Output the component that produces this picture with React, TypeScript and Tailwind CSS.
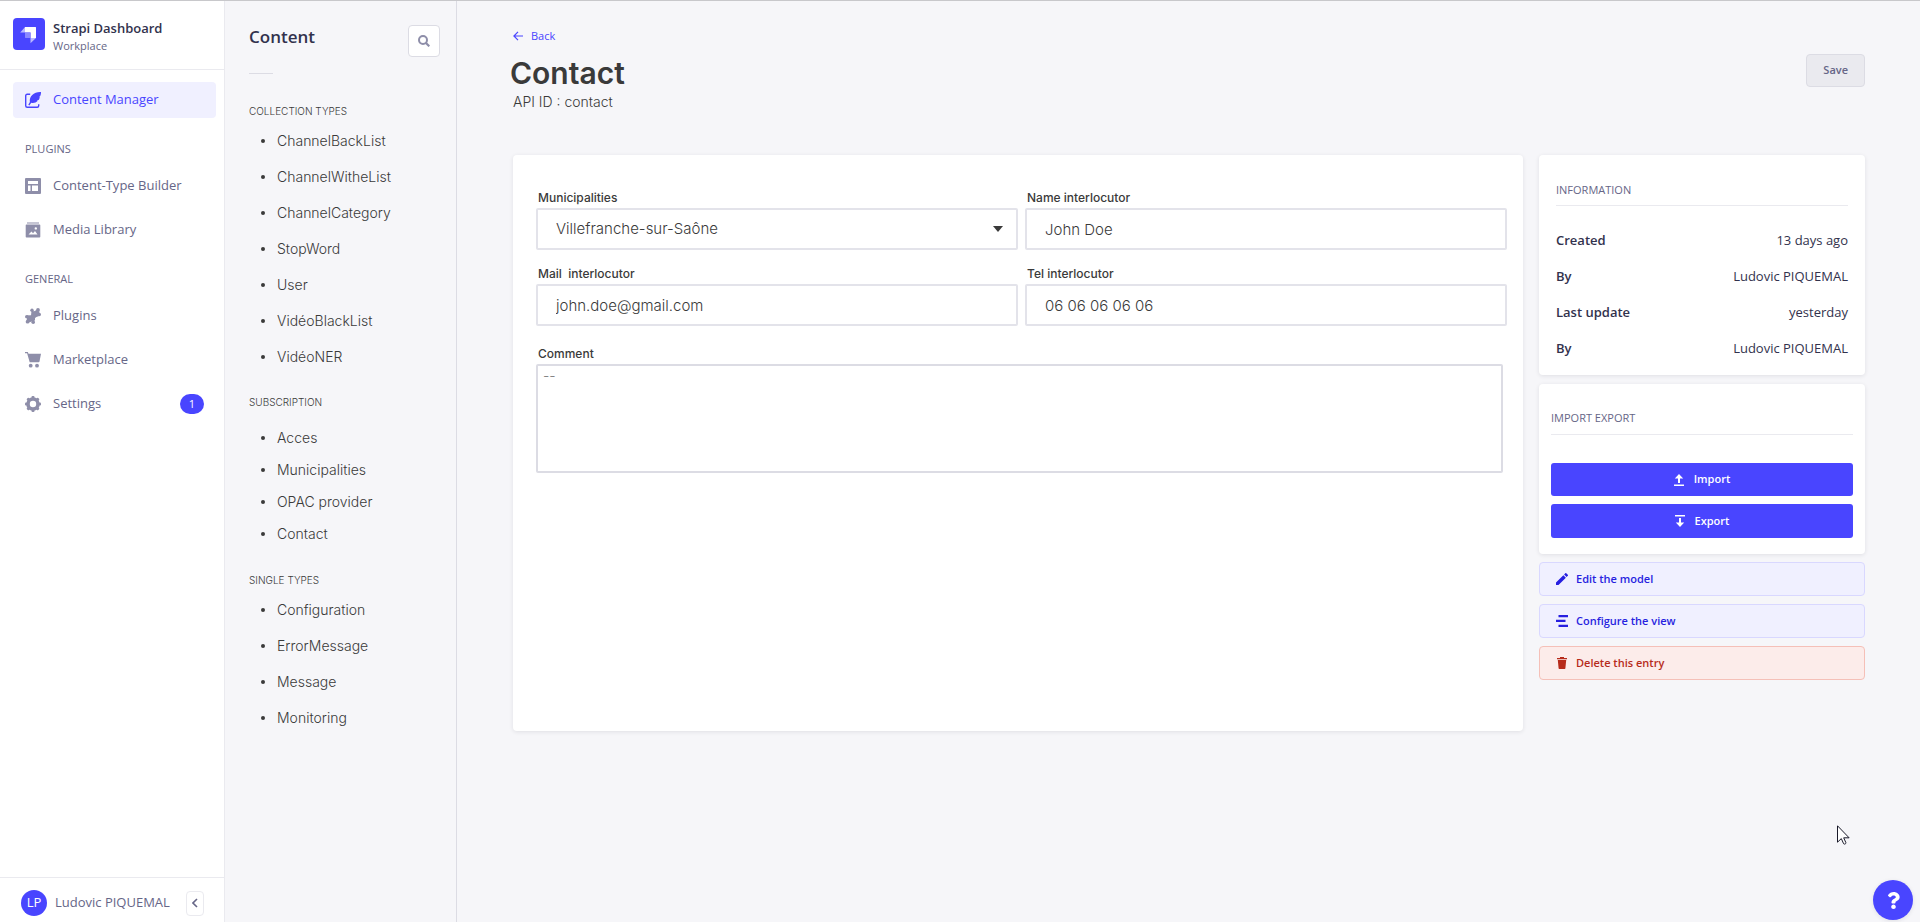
import { useState } from "react";
import clsx from "clsx";
import { FaQuestion } from "react-icons/fa";

const WriteIcon = () => (
  <svg width="16" height="16" viewBox="0 0 16 16" fill="none">
    <path
      d="M5.2 2.3H2.2C1.3 2.3.7 2.9.7 3.8v10c0 .9.6 1.5 1.5 1.5h10c.9 0 1.5-.6 1.5-1.5v-1.6"
      stroke="currentColor"
      strokeWidth="1.4"
    />
    <path
      d="M16 0c-3.500-.1-6.600.9-8.800 3C5 5.100 4.500 7.800 4.900 9.900L3.300 12.700l1.100.7 1.800-2.600c2.500.6 5-.2 6.300-1.700l-.6-.4 2-.9c.4-.8.7-1.700.9-2.500l-.6-.3 1-.9C15.900 2.500 16 1.200 16 0z"
      fill="currentColor"
    />
  </svg>
);

const LayoutIcon = () => (
  <svg width="16" height="16" viewBox="0 0 16 16" fill="currentColor">
    <path
      fillRule="evenodd"
      d="M1 0h14a1 1 0 0 1 1 1v14a1 1 0 0 1-1 1H1a1 1 0 0 1-1-1V1a1 1 0 0 1 1-1zm2 3v3h10V3H3zm0 4.500V13h2.500V7.500H3zm4 0V13h6V7.500H7z"
    />
  </svg>
);

const LandscapeIcon = () => (
  <svg width="16" height="16" viewBox="0 0 16 16" fill="currentColor">
    <rect x="2" y="0" width="12" height="2" opacity=".5" />
    <path
      fillRule="evenodd"
      d="M1.500 2.500h13c.5 0 .8.300.8.800v11.400c0 .5-.3.800-.8.800h-13c-.5 0-.8-.3-.8-.8V3.300c0-.5.3-.8.8-.8zM3.500 12.500h9L10 9l-2 2.200-1.500-1.600-3 2.900zM10.800 5.200a1.200 1.200 0 1 0 0 2.400 1.200 1.200 0 0 0 0-2.400z"
    />
  </svg>
);

const PuzzleIcon = () => (
  <svg width="16" height="16" viewBox="0 0 16 16" fill="currentColor">
    <path d="M7 2.500L8.800 3.500 11.500 2l3 2-1 3.500-3.500 2.500-1 4.500-2-1L3.500 14.500l-2-2.500 1-2 3.500-2.500z" />
    <circle cx="7" cy="2.300" r="1.700" />
    <circle cx="13" cy="2" r="1.900" />
    <circle cx="14.300" cy="6.500" r="1.700" />
    <circle cx="1.800" cy="8.700" r="1.800" />
    <circle cx="2.600" cy="13.700" r="1.900" />
    <circle cx="8.200" cy="14.200" r="1.800" />
    <rect x="2" y="7.300" width="8" height="5" />
    <rect x="6.500" y="3.500" width="7" height="5" />
  </svg>
);

const CartIcon = () => (
  <svg width="16" height="16" viewBox="0 0 16 16" fill="currentColor">
    <path d="M0 0h2.800l.7 1.700H16l-1.500 7.800c-.1.500-.4.800-.9.800H4.700L2.100 1.300H0V0z" />
    <circle cx="5.700" cy="13.700" r="1.900" />
    <circle cx="12" cy="13.700" r="1.900" />
  </svg>
);

const CogIcon = () => (
  <svg width="16" height="16" viewBox="0 0 16 16">
    <circle cx="8" cy="8" r="5" fill="none" stroke="currentColor" strokeWidth="3.600" />
    <g fill="currentColor">
      {[0, 45, 90, 135, 180, 225, 270, 315].map((a) => (
        <rect key={a} x="6.500" y="0" width="3" height="3" rx="1" transform={`rotate(${a} 8 8)`} />
      ))}
    </g>
  </svg>
);

const UploadIcon = () => (
  <svg width="10" height="12" viewBox="0 0 10 12" fill="currentColor">
    <path d="M5 0l4.200 4.500H6V9H4V4.500H.8L5 0zM0 10.500h10V12H0z" />
  </svg>
);

const DownloadIcon = () => (
  <svg width="10" height="12" viewBox="0 0 10 12" fill="currentColor">
    <path d="M0 0h10v1.500H0zM4 3h2v4.500h3.200L5 12 .8 7.500H4z" />
  </svg>
);

const PencilIcon = () => (
  <svg width="12" height="12" viewBox="3 3 18 18" fill="currentColor">
    <path d="M3 17.250V21h3.750L17.810 9.940l-3.750-3.750L3 17.250zM20.710 7.040a1 1 0 0 0 0-1.410l-2.340-2.340a1 1 0 0 0-1.410 0l-1.830 1.830 3.750 3.750 1.830-1.830z" />
  </svg>
);

const TrashIcon = () => (
  <svg width="12" height="12" viewBox="0 0 12 12" fill="currentColor">
    <path d="M4 0h4v1h3v1.200H1V1h3V0zM1.800 3h8.400l-.8 8.300c0 .4-.3.700-.7.700H3.300c-.4 0-.7-.3-.7-.7L1.800 3z" />
  </svg>
);

const BarsIcon = () => (
  <svg width="12" height="12" viewBox="0 0 12 12" fill="currentColor">
    <path d="M2.500 0H12v2.300H2.500zM0 4.800h9.500v2.300H0zM2.500 9.700H12V12H2.500z" />
  </svg>
);

const pluginLinks = [
  { label: "Content-Type Builder", icon: <LayoutIcon /> },
  { label: "Media Library", icon: <LandscapeIcon /> },
];

const generalLinks = [
  { label: "Plugins", icon: <PuzzleIcon /> },
  { label: "Marketplace", icon: <CartIcon /> },
  { label: "Settings", icon: <CogIcon />, badge: 1 },
];

const information = [
  ["Created", "13 days ago"],
  ["By", "Ludovic PIQUEMAL"],
  ["Last update", "yesterday"],
  ["By", "Ludovic PIQUEMAL"],
];

type NavLink = { label: string; icon: React.ReactNode; badge?: number };

const NavSection = ({ title, links }: { title: string; links: NavLink[] }) => (
  <section className="mt-[19px]">
    <h2 className="px-3 text-[11px] leading-4 font-medium text-[#666687]">
      {title}
    </h2>
    <ul className="mt-[7px]">
      {links.map(({ label, icon, badge }) => (
        <li key={label}>
          <a href="#" className="flex h-11 items-center gap-3 px-3">
            <span className="text-[#8e8ea9]">{icon}</span>
            {label}
            {badge && (
              <span className="ml-auto flex h-5 w-6 items-center justify-center rounded-full bg-[#4945ff] text-[11px] text-white">
                {badge}
              </span>
            )}
          </a>
        </li>
      ))}
    </ul>
  </section>
);

const SubNavSection = ({
  title,
  items,
  compact,
  className,
}: {
  title: string;
  items: string[];
  compact?: boolean;
  className?: string;
}) => (
  <section className={className}>
    <h3 className="text-[10px] leading-4">{title}</h3>
    <ul className={compact ? "mt-3" : "mt-1"}>
      {items.map((item) => (
        <li key={item}>
          <a
            href="#"
            className={clsx(
              "flex items-center gap-3 pl-3 text-sm",
              compact ? "h-8" : "h-9",
            )}
          >
            <span className="size-1 rounded-full bg-[#3a3a3a]" />
            {item}
          </a>
        </li>
      ))}
    </ul>
  </section>
);

const Label = ({ htmlFor, children }: { htmlFor: string; children: string }) => (
  <label
    htmlFor={htmlFor}
    className="block pl-0.5 text-xs leading-5 font-medium whitespace-pre"
  >
    {children}
  </label>
);

const inputClass =
  "h-[42px] w-full rounded-xs border-2 border-[#e3e3ea] bg-white pl-[18px] text-[15px] font-light outline-none";

export default function App() {
  const [municipality, setMunicipality] = useState("Villefranche-sur-Saône");
  const [name, setName] = useState("John Doe");
  const [mail, setMail] = useState("john.doe@gmail.com");
  const [tel, setTel] = useState("06 06 06 06 06");
  const [comment, setComment] = useState("");

  return (
    <div className="flex min-h-screen border-t border-[#c8c8cb] bg-[#f6f6f9] font-['Open_Sans',sans-serif] text-[13px] text-[#32324d]">
      <aside className="flex w-[225px] shrink-0 flex-col border-r border-[#eaeaef] bg-white text-[#666687]">
        <div className="flex h-[69px] items-start gap-2 border-b border-[#eaeaef] px-[13px] pt-[17px]">
          <svg width="32" height="32" viewBox="0 0 32 32">
            <rect width="32" height="32" rx="4" fill="#4945ff" />
            <path d="M12 9h10.500c.3 0 .5.200.5.500V20h-5.500v-5.500H12V9z" fill="#fff" />
            <path d="M12 9v5.500H7.200L12 9zM17.500 20H23l-5.500 5.300V20z" fill="#b9b7ff" />
            <path d="M12 14.500h5.500V20h-5c-.3 0-.5-.2-.5-.5v-5z" fill="#8b88ff" />
          </svg>
          <div>
            <p className="leading-5 font-semibold text-[#32324d]">
              Strapi Dashboard
            </p>
            <p className="text-[11px] leading-4">Workplace</p>
          </div>
        </div>

        <nav className="grow pt-3 pr-2 pl-[13px]">
          <a
            href="#"
            className="mb-[23px] flex h-9 items-center gap-3 rounded bg-[#f0f0ff] px-3 text-[#4945ff]"
          >
            <WriteIcon />
            Content Manager
          </a>
          <NavSection title="PLUGINS" links={pluginLinks} />
          <NavSection title="GENERAL" links={generalLinks} />
        </nav>

        <div className="flex h-[45px] items-center border-t border-[#eaeaef] pt-1.5 pr-5 pl-[21px]">
          <span className="flex size-[26px] items-center justify-center rounded-full bg-[#4945ff] text-[13px] text-white">
            LP
          </span>
          <span className="ml-2 whitespace-nowrap">Ludovic PIQUEMAL</span>
          <button
            type="button"
            aria-label="Collapse menu"
            className="ml-auto flex h-[25px] w-[18px] items-center justify-center rounded border border-[#eaeaef]"
          >
            <svg width="6" height="10" viewBox="0 0 6 10" fill="none">
              <path d="M5 1L1 5l4 4" stroke="currentColor" strokeWidth="1.600" />
            </svg>
          </button>
        </div>
      </aside>

      <aside className="w-[232px] shrink-0 border-r border-[#dcdce4] pt-6 pr-4 pl-6 font-[Inter,sans-serif] font-light text-[#3a3a3a]">
        <div className="flex items-start justify-between">
          <h2 className="font-['Open_Sans',sans-serif] text-[17px] leading-6 font-semibold text-[#32324d]">
            Content
          </h2>
          <button
            type="button"
            aria-label="Search"
            className="flex size-8 items-center justify-center rounded border border-[#dcdce4] bg-white text-[#8e8ea9]"
          >
            <svg width="12" height="12" viewBox="0 0 12 12" fill="none" stroke="currentColor">
              <circle cx="5" cy="5" r="4" strokeWidth="2" />
              <path d="M8 8l3.300 3.300" strokeWidth="2.200" />
            </svg>
          </button>
        </div>
        <hr className="mt-4 w-6 border-[#dcdce4]" />

        <SubNavSection
          title="COLLECTION TYPES"
          className="mt-[29px]"
          items={[
            "ChannelBackList",
            "ChannelWitheList",
            "ChannelCategory",
            "StopWord",
            "User",
            "VidéoBlackList",
            "VidéoNER",
          ]}
        />
        <SubNavSection
          title="SUBSCRIPTION"
          className="mt-[19px]"
          compact
          items={["Acces", "Municipalities", "OPAC provider", "Contact"]}
        />
        <SubNavSection
          title="SINGLE TYPES"
          className="mt-[22px]"
          items={["Configuration", "ErrorMessage", "Message", "Monitoring"]}
        />
      </aside>

      <main className="min-w-0 grow pt-[27px] pr-[55px] pl-14">
        <a href="#" className="flex w-fit items-center gap-2 text-[11px] leading-4 text-[#4945ff]">
          <svg width="10" height="10" viewBox="0 0 10 10" fill="none" stroke="currentColor">
            <path d="M10 5H1M5 .8L.9 5 5 9.200" strokeWidth="1.200" />
          </svg>
          Back
        </a>

        <header className="mt-[10px] flex items-start justify-between font-[Inter,sans-serif] text-[#3a3a3a]">
          <div>
            <h1 className="-ml-[3px] text-[30px] leading-[38px] font-semibold">
              Contact
            </h1>
            <p className="text-sm leading-5 font-light">API ID : contact</p>
          </div>
          <button
            type="button"
            className="h-[33px] rounded border border-[#dcdce4] bg-[#eaeaef] px-4 font-['Open_Sans',sans-serif] text-[11px] font-semibold text-[#666687]"
          >
            Save
          </button>
        </header>

        <div className="mt-[43px] flex items-start gap-4">
          <form className="min-h-[576px] min-w-0 grow rounded bg-white pt-[33px] pr-4 pl-[23px] font-[Inter,sans-serif] text-[#3a3a3a] shadow-[0_1px_4px_rgba(33,33,52,0.1)]">
            <div className="grid grid-cols-2 gap-x-[7px] gap-y-[14px]">
              <div>
                <Label htmlFor="municipalities">Municipalities</Label>
                <div className="relative">
                  <select
                    id="municipalities"
                    value={municipality}
                    onChange={(e) => setMunicipality(e.target.value)}
                    className={clsx(inputClass, "appearance-none")}
                  >
                    <option>Villefranche-sur-Saône</option>
                  </select>
                  <svg
                    width="10"
                    height="6"
                    viewBox="0 0 10 6"
                    className="pointer-events-none absolute top-[18px] right-[15px]"
                  >
                    <path d="M0 0h10L5 6z" fill="#3a3a3a" />
                  </svg>
                </div>
              </div>
              <div>
                <Label htmlFor="name">Name interlocutor</Label>
                <input
                  id="name"
                  value={name}
                  onChange={(e) => setName(e.target.value)}
                  className={inputClass}
                />
              </div>
              <div>
                <Label htmlFor="mail">{"Mail  interlocutor"}</Label>
                <input
                  id="mail"
                  type="email"
                  value={mail}
                  onChange={(e) => setMail(e.target.value)}
                  className={inputClass}
                />
              </div>
              <div>
                <Label htmlFor="tel">Tel interlocutor</Label>
                <input
                  id="tel"
                  type="tel"
                  value={tel}
                  onChange={(e) => setTel(e.target.value)}
                  className={inputClass}
                />
              </div>
            </div>
            <div className="mt-[18px] mr-1">
              <Label htmlFor="comment">Comment</Label>
              <textarea
                id="comment"
                placeholder="--"
                value={comment}
                onChange={(e) => setComment(e.target.value)}
                className="block h-[109px] w-full resize-none rounded-xs border-2 border-[#dcdce4] px-[5px] text-sm font-light outline-none placeholder:text-[#7c7c7c]"
              />
            </div>
          </form>

          <div className="flex w-[326px] shrink-0 flex-col gap-2">
            <section className="mb-px rounded bg-white px-[17px] pt-[27px] pb-2 shadow-[0_1px_4px_rgba(33,33,52,0.1)]">
              <h2 className="border-b border-[#eaeaef] pb-[7px] text-[11px] leading-4 text-[#666687]">
                INFORMATION
              </h2>
              <dl className="mt-[17px]">
                {information.map(([term, value], i) => (
                  <div key={i} className="flex h-9 items-center justify-between">
                    <dt className="font-semibold">{term}</dt>
                    <dd>{value}</dd>
                  </div>
                ))}
              </dl>
            </section>

            <section className="flex flex-col gap-2 rounded bg-white px-3 pt-[26px] pb-4 text-[11px] shadow-[0_1px_4px_rgba(33,33,52,0.1)]">
              <h2 className="mb-5 border-b border-[#eaeaef] pb-2 leading-4 text-[#666687]">
                IMPORT EXPORT
              </h2>
              <button
                type="button"
                className="flex h-[33px] items-center justify-center gap-[10px] rounded-[3px] bg-[#4945ff] font-semibold text-white"
              >
                <UploadIcon />
                Import
              </button>
              <button
                type="button"
                className="flex h-[34px] items-center justify-center gap-[10px] rounded-[3px] bg-[#4945ff] font-semibold text-white"
              >
                <DownloadIcon />
                Export
              </button>
            </section>

            <button
              type="button"
              className="flex h-[34px] items-center gap-2 rounded border border-[#d9d8ff] bg-[#f0f0ff] px-4 text-[11px] font-semibold text-[#271fe0]"
            >
              <PencilIcon />
              Edit the model
            </button>
            <button
              type="button"
              className="flex h-[34px] items-center gap-2 rounded border border-[#d9d8ff] bg-[#f0f0ff] px-4 text-[11px] font-semibold text-[#271fe0]"
            >
              <BarsIcon />
              Configure the view
            </button>
            <button
              type="button"
              className="flex h-[34px] items-center gap-2 rounded border border-[#f5c0b8] bg-[#fcecea] px-4 text-[11px] font-semibold text-[#b72b1a]"
            >
              <TrashIcon />
              Delete this entry
            </button>
          </div>
        </div>
      </main>

      <svg
        width="13"
        height="20"
        viewBox="0 0 13 20"
        className="pointer-events-none fixed right-[70px] bottom-[77px]"
      >
        <path
          d="M.5.8v16.400l3.800-3.600 2.300 5.100c.8.900 2.500.2 2.300-1l-2.200-4.900h5.400L.5.800z"
          fill="#fff"
          stroke="#1a1a2a"
        />
      </svg>
      <button
        type="button"
        aria-label="Help"
        className="fixed right-[7px] bottom-[2px] flex size-10 items-center justify-center rounded-full bg-[#4945ff] text-white shadow-[0_1px_4px_rgba(33,33,52,0.1)]"
      >
        <FaQuestion size={17} />
      </button>
    </div>
  );
}
